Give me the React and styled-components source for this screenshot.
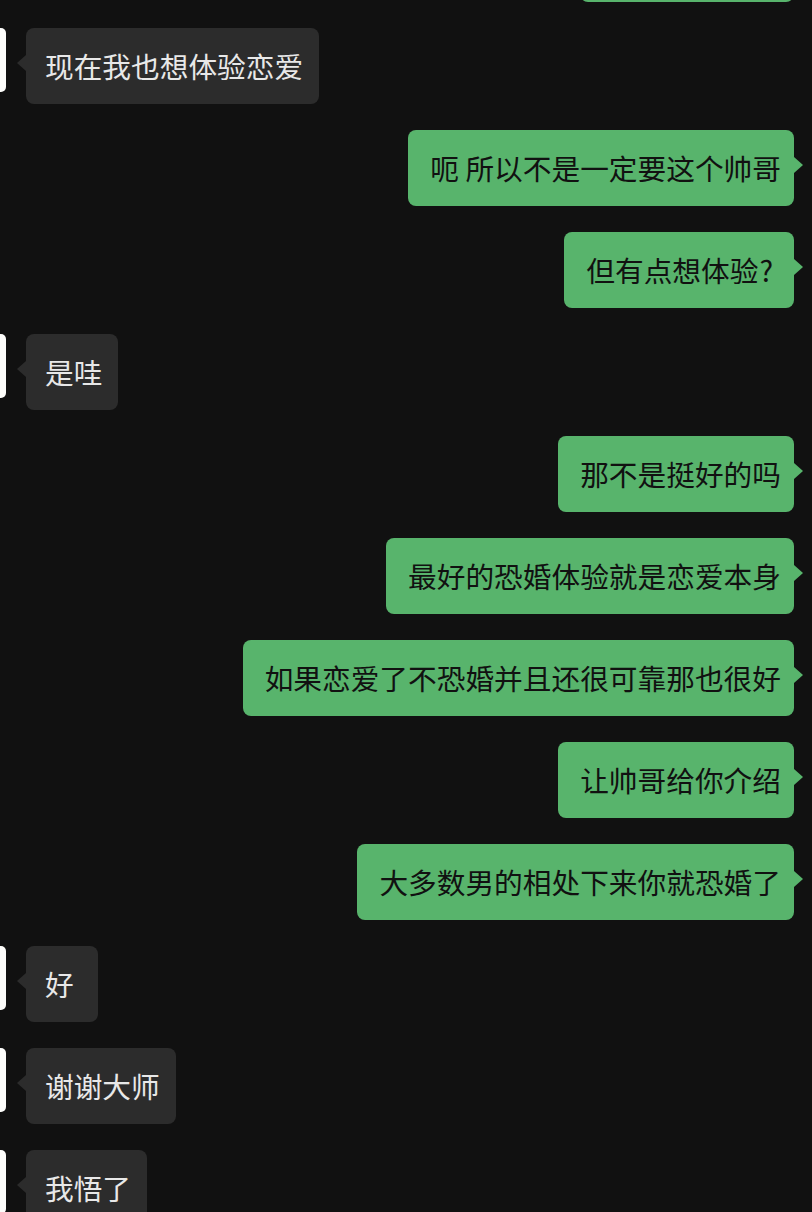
import React from "react";
import styled, { createGlobalStyle } from "styled-components";

const GlobalStyle = createGlobalStyle`
  html, body {
    margin: 0;
    padding: 0;
    background: #111111;
  }
  * { box-sizing: border-box; }
`;

const Page = styled.div`
  width: 812px;
  height: 1212px;
  overflow: hidden;
  background: #111111;
  font-family: "Noto Sans CJK SC", "Noto Sans", sans-serif;
`;

const List = styled.div`
  display: flex;
  flex-direction: column;
  gap: 26px;
  margin-top: -74px;
`;

const Row = styled.div`
  display: flex;
  flex-direction: row;
  align-items: flex-start;
  justify-content: ${(p) => (p.mine ? "flex-end" : "flex-start")};
  padding-right: ${(p) => (p.mine ? "18px" : "0")};
`;

const Avatar = styled.div`
  width: 64px;
  height: 64px;
  margin-left: -58px;
  margin-right: 20px;
  border-radius: 5px;
  background: #fdfdfb;
  flex-shrink: 0;
`;

const Bubble = styled.div`
  position: relative;
  height: 76px;
  min-width: 72px;
  display: flex;
  align-items: center;
  border-radius: 8px;
  font-size: 28.7px;
  line-height: 1;
  white-space: pre;
  background: ${(p) => (p.mine ? "#58b46c" : "#2c2c2c")};
  color: ${(p) => (p.mine ? "#111111" : "#e8e8e8")};
  padding: ${(p) => (p.mine ? "0 13px 0 22px" : "0 16px 0 19px")};

  &::before {
    content: "";
    position: absolute;
    top: 27px;
    width: 0;
    height: 0;
    border-top: 8px solid transparent;
    border-bottom: 8px solid transparent;
    ${(p) =>
      p.mine
        ? `right: -9px; border-left: 9px solid #58b46c;`
        : `left: -9px; border-right: 9px solid #2c2c2c;`}
  }
`;

// half-width question mark sits a bit wider in the original font
const Punct = styled.span`
  padding: 0 8px 0 1px;
`;

const messages = [
  { mine: true, text: "嗯 好像不一定" },
  { mine: false, text: "现在我也想体验恋爱" },
  { mine: true, text: "呃 所以不是一定要这个帅哥" },
  { mine: true, text: "但有点想体验", punct: "?" },
  { mine: false, text: "是哇" },
  { mine: true, text: "那不是挺好的吗" },
  { mine: true, text: "最好的恐婚体验就是恋爱本身" },
  { mine: true, text: "如果恋爱了不恐婚并且还很可靠那也很好" },
  { mine: true, text: "让帅哥给你介绍" },
  { mine: true, text: "大多数男的相处下来你就恐婚了" },
  { mine: false, text: "好" },
  { mine: false, text: "谢谢大师" },
  { mine: false, text: "我悟了" },
];

export default function App() {
  return (
    <>
      <GlobalStyle />
      <Page>
        <List>
          {messages.map((m, i) => (
            <Row key={i} mine={m.mine}>
              {!m.mine && <Avatar />}
              <Bubble mine={m.mine}>
                {m.text}
                {m.punct && <Punct>{m.punct}</Punct>}
              </Bubble>
            </Row>
          ))}
        </List>
      </Page>
    </>
  );
}
